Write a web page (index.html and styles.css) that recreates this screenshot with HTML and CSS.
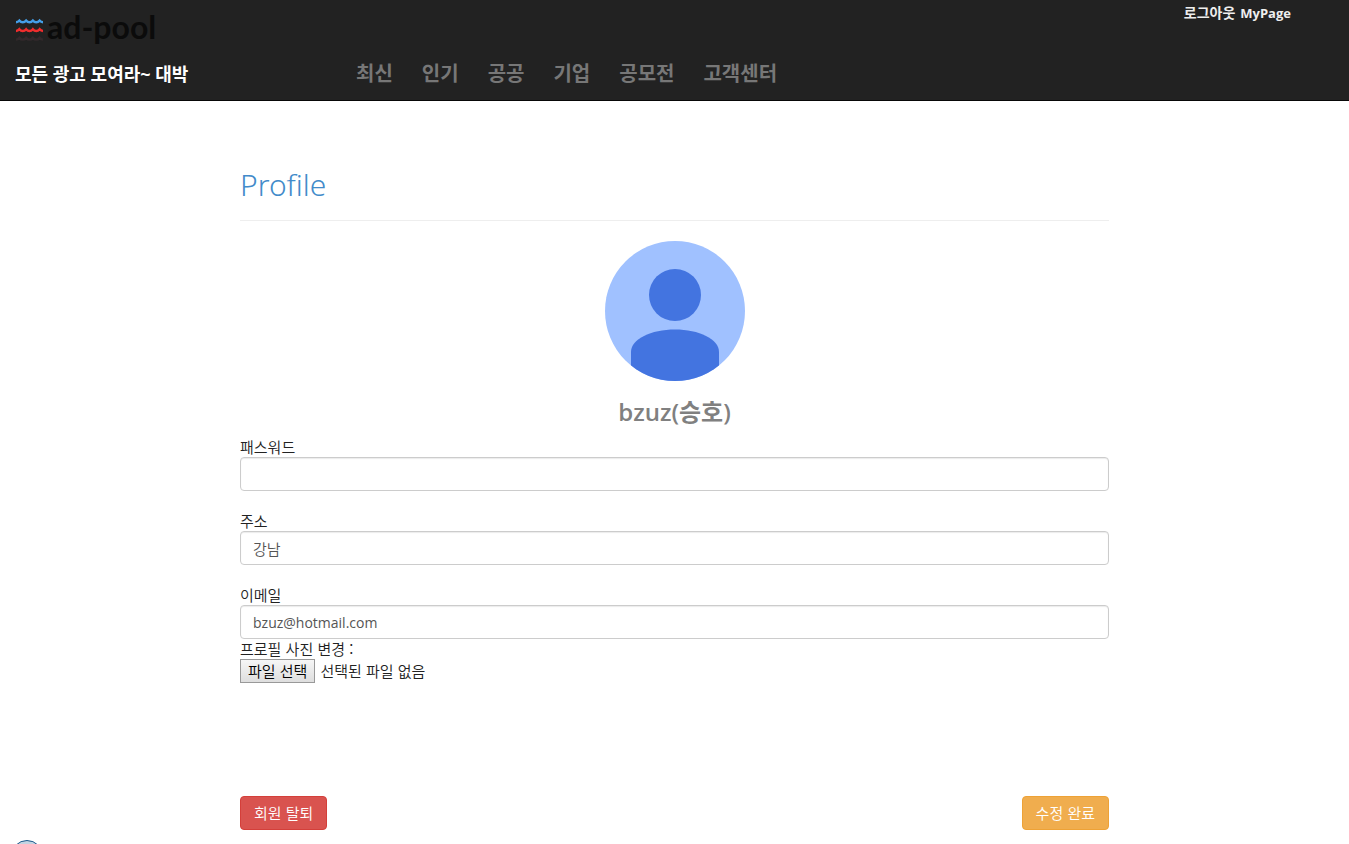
FILE: index.html
```html
<!DOCTYPE html>
<html lang="ko">
<head>
<meta charset="utf-8">
<title>ad-pool</title>
<link rel="stylesheet" href="styles.css">
</head>
<body>
<header class="site-header">
  <div class="top-row">
    <a class="logo" href="#">
      <svg class="logo-waves" viewBox="0 0 28 26" width="27" height="26" fill="none" stroke-width="2.5" aria-hidden="true">
        <path stroke="#449fe8" d="M0 6Q2 5.800 3.500 4.200Q5 6 7 6Q9 6 10.500 4.200Q12 6 14 6Q16 6 17.500 4.200Q19 6 21 6Q23 6 24.500 4.200Q26 5.800 28 6"/>
        <path stroke="#ef2d2d" d="M0 15Q2 14.800 3.500 13.200Q5 15 7 15Q9 15 10.500 13.200Q12 15 14 15Q16 15 17.500 13.200Q19 15 21 15Q23 15 24.500 13.200Q26 14.800 28 15"/>
        <path stroke="#33292c" d="M0 24Q2 23.800 3.500 22.200Q5 24 7 24Q9 24 10.500 22.200Q12 24 14 24Q16 24 17.500 22.200Q19 24 21 24Q23 24 24.500 22.200Q26 23.800 28 24"/>
      </svg>
      <span class="logo-text">ad-pool</span>
    </a>
    <nav class="account-nav">
      <a class="logout" href="#">로그아웃</a>
      <a href="#">MyPage</a>
    </nav>
  </div>
  <div class="nav-row">
    <a class="slogan" href="#">모든 광고 모여라~ 대박</a>
    <nav class="main-nav">
      <a href="#">최신</a>
      <a href="#">인기</a>
      <a href="#">공공</a>
      <a href="#">기업</a>
      <a href="#">공모전</a>
      <a href="#">고객센터</a>
    </nav>
  </div>
</header>

<main class="profile">
  <h1 class="title">Profile</h1>
  <div class="identity">
    <svg class="avatar" viewBox="0 0 140 140" width="140" height="140" role="img" aria-label="bzuz">
      <clipPath id="disc"><circle cx="70" cy="70" r="70"/></clipPath>
      <g clip-path="url(#disc)">
        <rect width="140" height="140" fill="#a0c1ff"/>
        <circle cx="70" cy="54" r="26" fill="#4374e0"/>
        <path fill="#4374e0" d="M26 140V111C26 98 46 88.500 70 88.500S114 98 114 111V140Z"/>
      </g>
    </svg>
    <h2 class="name">bzuz(승호)</h2>
  </div>
  <form class="profile-form">
    <div class="field">
      <label for="password">패스워드</label>
      <input class="text-input" id="password" type="password">
    </div>
    <div class="field">
      <label for="address">주소</label>
      <input class="text-input" id="address" type="text" value="강남">
    </div>
    <div class="field">
      <label for="email">이메일</label>
      <input class="text-input latin" id="email" type="email" value="bzuz@hotmail.com">
      <span class="photo-label" id="photo-label">프로필 사진 변경 :</span>
      <div class="file-row">
        <input class="file-input" id="photo" type="file" aria-labelledby="photo-label">
        <label class="file-button" for="photo">파일 선택</label>
        <span>선택된 파일 없음</span>
      </div>
    </div>
    <div class="actions">
      <button class="button danger" type="button">회원 탈퇴</button>
      <button class="button warning" type="submit">수정 완료</button>
    </div>
  </form>
</main>
<a class="corner-badge" href="#" aria-label="도움말"></a>
</body>
</html>
```

FILE: styles.css
```css
* { box-sizing: border-box; }

body {
  margin: 0;
  background: #fff;
  color: #333;
  font: 15px/20px "Open Sans", "Noto Sans CJK KR", sans-serif;
}

a { text-decoration: none; }

.site-header {
  background: #222;
  border-bottom: 1px solid #080808;
  padding: 0 15px;
}

.top-row {
  display: flex;
  justify-content: space-between;
  align-items: flex-start;
  height: 48px;
}

.logo {
  display: flex;
  align-items: center;
  gap: 4px;
  padding: 11px 0 0 1px;
}

.logo-waves { margin-top: 4px; }

.logo-text {
  color: #0b0b0b;
  font: 700 32px/32px Lato, sans-serif;
}

.account-nav {
  display: flex;
  align-items: baseline;
  gap: 5px;
  padding: 3px 43px 0 0;
}

.account-nav a {
  color: #eee;
  font-size: 13px;
  font-weight: 700;
}

.account-nav .logout { font-size: 14px; }

.nav-row {
  display: flex;
  align-items: center;
  height: 52px;
}

.slogan {
  width: 341px;
  color: #fff;
  font-size: 18px;
  font-weight: 700;
}

.main-nav {
  display: flex;
  gap: 29px;
}

.main-nav a {
  color: #777;
  font-size: 20px;
  font-weight: 700;
}

.profile {
  width: 100%;
  max-width: 869px;
  margin: 0 auto;
  padding-top: 66px;
}

.title {
  margin: 0 0 20px;
  padding-bottom: 17px;
  border-bottom: 1px solid #eee;
  color: #428bca;
  font: 300 30px/36px "Noto Sans", "Open Sans", sans-serif;
}

.identity {
  display: flex;
  flex-direction: column;
  align-items: center;
}

.name {
  margin: 16px 0 10px;
  color: #808080;
  font-size: 24px;
  font-weight: 600;
  line-height: 30px;
}

.profile-form {
  color: #222;
  font-weight: 350;
  font-family: "Noto Sans CJK KR", sans-serif;
}

.field {
  display: flex;
  flex-direction: column;
  margin-bottom: 20px;
}

.field label { line-height: 20px; }

.text-input {
  width: 100%;
  height: 34px;
  padding: 6px 12px;
  border: 1px solid #ccc;
  border-radius: 4px;
  box-shadow: inset 0 1px 1px rgba(0, 0, 0, 0.08);
  background: #fff;
  color: #555;
  font: inherit;
}

.text-input.latin {
  font: 400 14px/20px "Open Sans", "Noto Sans CJK KR", sans-serif;
}

.file-row {
  display: flex;
  align-items: center;
  gap: 5px;
}

.file-input {
  position: absolute;
  width: 1px;
  height: 1px;
  opacity: 0;
}

.file-row .file-button {
  padding: 1px 7px;
  border: 1px solid #999;
  background: linear-gradient(#f6f6f6, #dedede);
  color: #000;
}

.actions {
  display: flex;
  justify-content: space-between;
  padding: 93px 0 14px;
}

.button {
  padding: 6px 13px;
  border: 1px solid;
  border-radius: 4px;
  color: #fff;
  font: inherit;
}

.danger {
  background: #d9534f;
  border-color: #d43f3a;
}

.warning {
  background: #f0ad4e;
  border-color: #eea236;
}

.corner-badge {
  position: fixed;
  left: 11px;
  bottom: -28px;
  width: 32px;
  height: 32px;
  border: 1px solid #1d5a8c;
  border-radius: 50%;
  background: #c3d4e2;
}
```
